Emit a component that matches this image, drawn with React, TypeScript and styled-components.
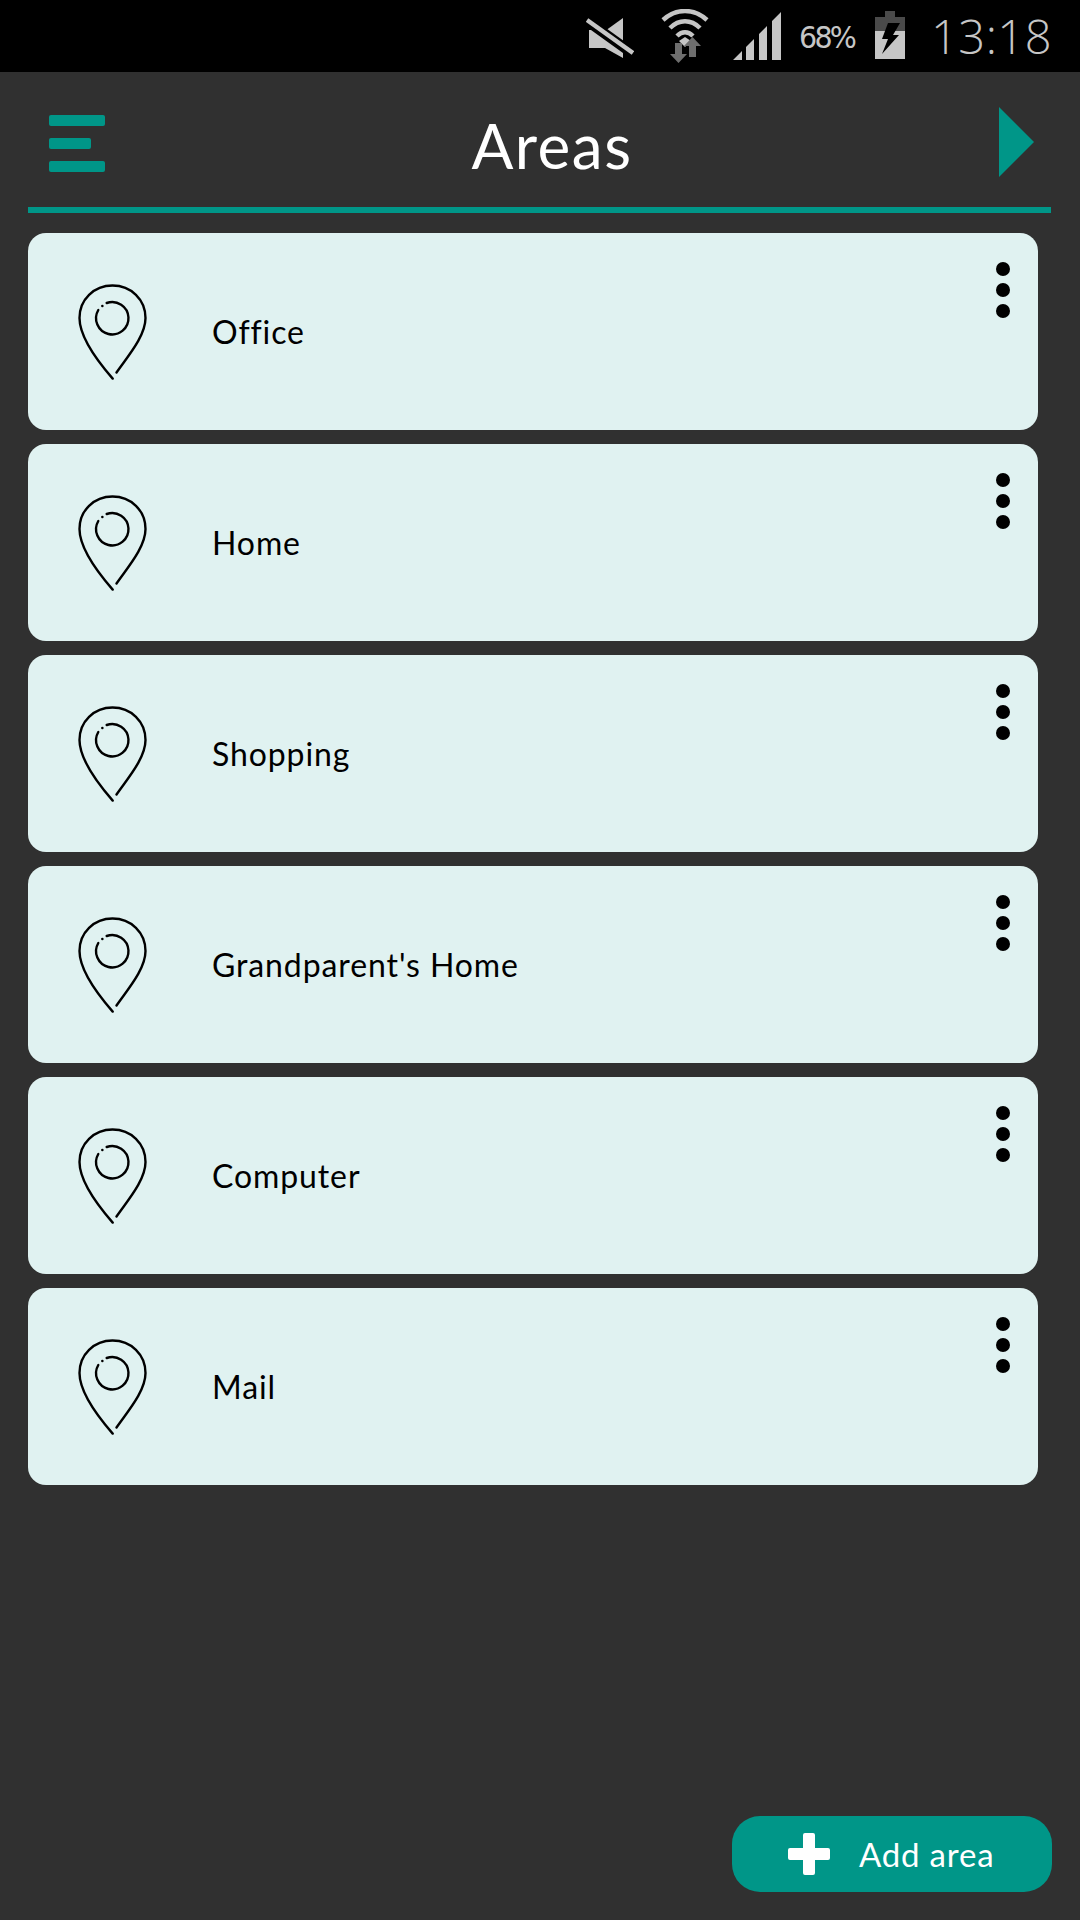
import React from "react";
import styled, { createGlobalStyle } from "styled-components";

const Global = createGlobalStyle`
  html, body { margin: 0; padding: 0; background: #303030; }
  * { box-sizing: border-box; }
`;

const Screen = styled.div`
  width: 1080px;
  height: 1920px;
  display: flex;
  flex-direction: column;
  background: #303030;
  font-family: Lato, "Open Sans", sans-serif;
  overflow: hidden;
`;

const StatusBar = styled.div`
  height: 72px;
  flex: none;
  background: #000;
  display: flex;
  align-items: flex-start;
  justify-content: flex-end;
  padding-right: 28px;
  color: #c6c6c6;
`;

const StatusIcon = styled.svg<{ $left: number; $top: number }>`
  display: block;
  flex: none;
  margin-left: ${(p) => p.$left}px;
  margin-top: ${(p) => p.$top}px;
`;

const Percent = styled.span`
  margin-left: 18px;
  margin-top: 17px;
  font-family: "DejaVu Sans", sans-serif;
  font-weight: 400;
  font-size: 31px;
  line-height: 40px;
  letter-spacing: -3px;
  transform: scaleX(0.92);
  transform-origin: left center;
  width: 66px;
  white-space: nowrap;
`;

const Clock = styled.span`
  margin-left: 26px;
  margin-top: 14px;
  font-family: "Open Sans", sans-serif;
  font-weight: 300;
  font-size: 47px;
  line-height: 44px;
  letter-spacing: 0.5px;
  white-space: nowrap;
`;

const Header = styled.header`
  height: 135px;
  flex: none;
  margin: 0 29px 0 28px;
  padding: 35px 17px 0 21px;
  display: flex;
  justify-content: space-between;
  align-items: flex-start;
  border-bottom: 6px solid #009688;
  height: 141px;
`;

const Burger = styled.div`
  width: 56px;
  margin-top: 8px;
  display: flex;
  flex-direction: column;
  gap: 12px;
`;

const BurgerBar = styled.span<{ $w: number }>`
  display: block;
  width: ${(p) => p.$w}px;
  height: 11px;
  border-radius: 2px;
  background: #009688;
`;

const Title = styled.h1`
  margin: 0;
  font-size: 62px;
  line-height: 76px;
  font-weight: 400;
  color: #fff;
  letter-spacing: 1.5px;
`;

const Forward = styled.span`
  width: 0;
  height: 0;
  border-style: solid;
  border-width: 35px 0 35px 35px;
  border-color: transparent transparent transparent #009688;
`;

const List = styled.main`
  flex: 1;
  margin-top: 20px;
  padding: 0 42px 0 28px;
  display: flex;
  flex-direction: column;
  gap: 14px;
`;

const Card = styled.div`
  height: 197px;
  flex: none;
  background: #e0f2f1;
  border-radius: 18px;
  display: flex;
  align-items: center;
  padding-left: 50px;
`;

const Pin = styled.svg`
  display: block;
  flex: none;
`;

const Name = styled.span`
  margin-left: 64px;
  flex: 1;
  font-size: 32px;
  letter-spacing: 0.9px;
  color: #000;
`;

const Dots = styled.div`
  align-self: flex-start;
  margin: 29px 28px 0 0;
  display: flex;
  flex-direction: column;
  gap: 7px;
`;

const Dot = styled.span`
  display: block;
  width: 14px;
  height: 14px;
  border-radius: 50%;
  background: #000;
`;

const Footer = styled.div`
  flex: none;
  display: flex;
  justify-content: flex-end;
  padding: 0 28px 28px 0;
`;

const AddButton = styled.button`
  width: 320px;
  height: 76px;
  border: 0;
  border-radius: 28px;
  background: #009688;
  color: #fff;
  display: flex;
  align-items: center;
  padding: 0 0 0 56px;
  font-family: inherit;
  font-size: 33px;
  letter-spacing: 0.8px;
`;

const PlusIcon = styled.svg`
  display: block;
  flex: none;
  margin-right: 29px;
`;

const areas = ["Office", "Home", "Shopping", "Grandparent's Home", "Computer", "Mail"];

export default function App() {
  return (
    <Screen>
      <Global />
      <StatusBar>
        <StatusIcon $left={0} $top={17} width="48" height="42" viewBox="0 0 48 42">
          <path d="M4 16h8L37 0v13L4 13z M4 17h4l29 24V30L4 15z" fill="none" />
          <path d="M3 13 L5 13 L37 36 V41 L19 31 H3 Z" fill="#c6c6c6" />
          <path d="M19 14 L37 1 V26 Z" fill="#c6c6c6" />
          <path d="M1 3 L47 36" stroke="#000" strokeWidth="9" />
          <path d="M1 3 L47 36" stroke="#c6c6c6" strokeWidth="4.5" />
        </StatusIcon>
        <StatusIcon $left={27} $top={9} width="48" height="54" viewBox="0 0 48 54">
          <g fill="none" stroke="#c6c6c6" strokeWidth="4.5">
            <path d="M2 11 C15 -1 33 -1 46 11" />
            <path d="M9 19 C18 10 30 10 39 19" />
            <path d="M16 27 C21 22 27 22 32 27" />
          </g>
          <path d="M18 32 L24 28 L30 32 L24 38 Z" fill="#c6c6c6" />
          <path d="M14 34 H21 V45 H26 L17.5 54 L9 45 H14 Z" fill="#6e6e6e" />
          <path d="M28 48 V37 H23 L31.5 28 L40 37 H35 V48 Z" fill="#6e6e6e" />
        </StatusIcon>
        <StatusIcon $left={24} $top={12} width="48" height="48" viewBox="0 0 48 48">
          <path d="M0 48 L9 39 V48 Z M13 48 V35 L21 27 V48 Z M26 48 V22 L34 14 V48 Z M39 48 V9 L48 0 V48 Z" fill="#c6c6c6" />
        </StatusIcon>
        <Percent>68%</Percent>
        <StatusIcon $left={10} $top={11} width="30" height="48" viewBox="0 0 30 48">
          <path d="M10 0 H20 V6 H30 V48 H0 V6 H10 Z" fill="#c6c6c6" />
          <path d="M10 0 H20 V6 H30 V20 H0 V6 H10 Z" fill="#4a4a4a" />
          <path d="M13 12 H25 L18 24 H24 L7 43 L13 28 H7 Z" fill="#000" />
        </StatusIcon>
        <Clock>13:18</Clock>
      </StatusBar>
      <Header>
        <Burger>
          <BurgerBar $w={56} />
          <BurgerBar $w={42} />
          <BurgerBar $w={56} />
        </Burger>
        <Title>Areas</Title>
        <Forward />
      </Header>
      <List>
        {areas.map((name) => (
          <Card key={name}>
            <Pin width="70" height="96" viewBox="0 0 70 96" fill="none" stroke="#000" strokeWidth="2.4" strokeLinecap="round">
              <path d="M34.7 94.6 C22 80 1.5 55 1.5 34 C1.5 15.5 16 1.5 34.5 1.5 C53 1.5 67.5 15.5 67.5 34 C67.5 52 50 72 38.5 88.5" />
              <path d="M28.7 19 A16.2 16.2 0 1 1 20.3 26" />
              <path d="M24.3 22 L24.4 22" />
            </Pin>
            <Name>{name}</Name>
            <Dots>
              <Dot />
              <Dot />
              <Dot />
            </Dots>
          </Card>
        ))}
      </List>
      <Footer>
        <AddButton>
          <PlusIcon width="42" height="42" viewBox="0 0 42 42">
            <path d="M17 0 H25 A2 2 0 0 1 27 2 V15 H40 A2 2 0 0 1 42 17 V25 A2 2 0 0 1 40 27 H27 V40 A2 2 0 0 1 25 42 H17 A2 2 0 0 1 15 40 V27 H2 A2 2 0 0 1 0 25 V17 A2 2 0 0 1 2 15 H15 V2 A2 2 0 0 1 17 0 Z" fill="#fff" />
          </PlusIcon>
          Add area
        </AddButton>
      </Footer>
    </Screen>
  );
}
